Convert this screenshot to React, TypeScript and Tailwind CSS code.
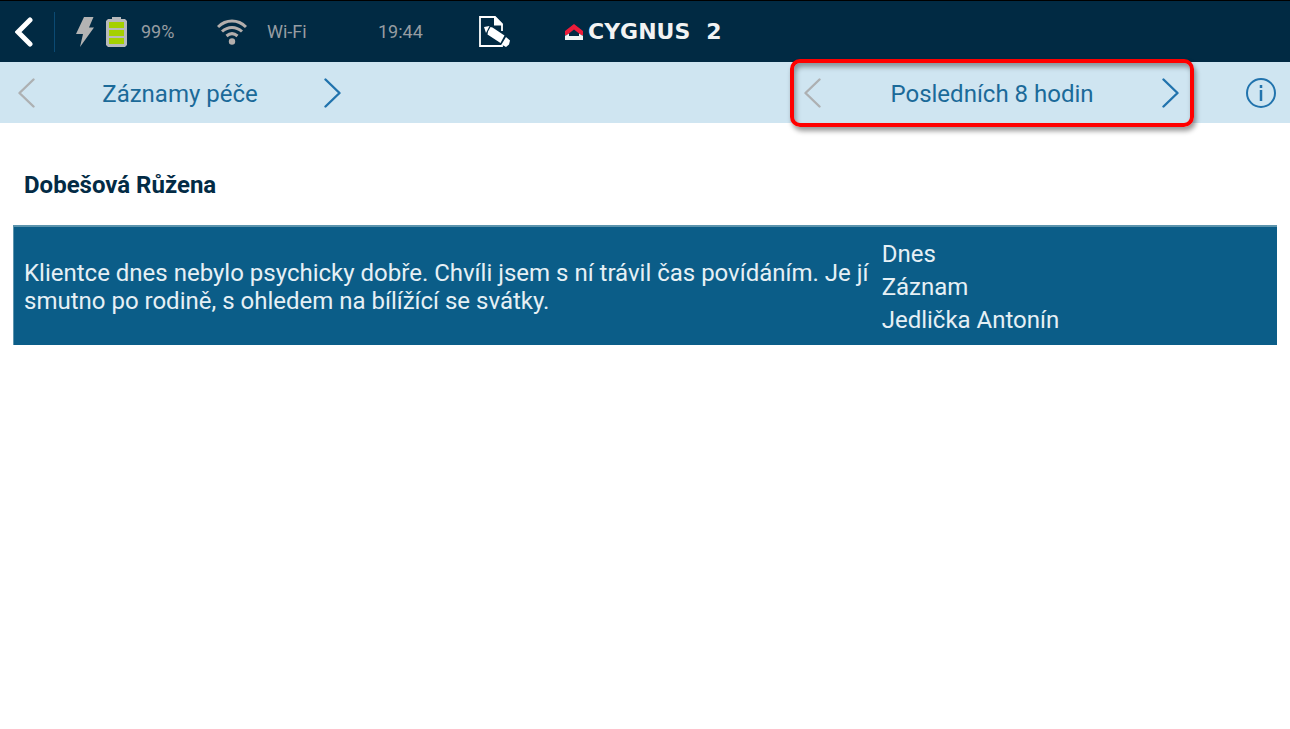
type SwitcherProps = {
  label: string;
  highlighted?: boolean;
};

const Chevron = ({ direction }: { direction: "left" | "right" }) => (
  <svg viewBox="0 0 18 32" className="h-8 w-[18px]" fill="none" stroke="currentColor" strokeWidth="2.400" strokeLinecap="round" strokeLinejoin="round">
    <path d={direction === "left" ? "M15.500 2.500 1.500 16 15.500 29.500" : "M1.500 2.500 15.500 16 1.500 29.500"} />
  </svg>
);

const Switcher = ({ label, highlighted }: SwitcherProps) => (
  <div className={`relative flex h-full items-center justify-between ${highlighted ? "w-[404px] px-[14px]" : "w-[360px] px-[18px]"}`}>
    <button type="button" aria-label="Předchozí" className="text-[#adb0b2]" disabled>
      <Chevron direction="left" />
    </button>
    <span className="pt-0.5 text-2xl">{label}</span>
    <button type="button" aria-label="Další" className="text-[#2173ad]">
      <Chevron direction="right" />
    </button>
    {highlighted && (
      <div className="pointer-events-none absolute inset-x-0 -top-[3px] -bottom-1 rounded-[10px] border-4 border-[#ff0000] shadow-[2px_4px_5px_rgba(0,0,0,0.4),inset_2px_4px_5px_rgba(0,0,0,0.35)]" />
    )}
  </div>
);

const BoltIcon = () => (
  <svg viewBox="0 0 18 31" className="ml-[21px] h-[31px] w-[18px]" fill="#b3b3b3">
    <path d="M8 1h9.500l-4.500 10.500h5L4 31l3-13H0z" />
  </svg>
);

const BatteryIcon = () => (
  <svg viewBox="0 0 21 30" className="ml-3 h-[30px] w-[21px]">
    <path d="M6 0h9v2h4l2 2v24l-2 2H2l-2-2V4l2-2h4z" fill="#b8b9bb" />
    <path d="M3 5h15v6H3zM3 13h15v6H3zM3 21h15v6H3z" fill="#a5d000" />
  </svg>
);

const WifiIcon = () => (
  <svg viewBox="0 0 30 26" className="h-[26px] w-[30px]" fill="none" stroke="#b3aeac" strokeWidth="3">
    <path d="M1 8C9 0 21 0 29 8M5 12.500C11 7 19 7 25 12.500M9.500 17C13 14 17 14 20.500 17" />
    <circle cx="15" cy="22.500" r="3.200" fill="#b3aeac" stroke="none" />
  </svg>
);

const NoteIcon = () => (
  <svg viewBox="0 0 32 32" className="h-8 w-8" fill="#fff">
    <path d="M23 15V8L16 1H1v29h22v-1.500" fill="none" stroke="#fff" strokeWidth="1.800" />
    <path d="M15 1h1.500L23.500 8v1.500H15z" />
    <path d="M5 11l5.500-1-3.500 7zM11.500 11 13.500 11.500 25.500 19.500 21.500 27 8.500 18.500 9 15.500zM27 21l4 3.500-1 4-3 2.500-4.500-2.500z" />
  </svg>
);

const Logo = () => (
  <div className="flex items-center font-['DejaVu_Sans',sans-serif] text-[22px] leading-6 font-bold text-[#f2f3f3]">
    <svg viewBox="0 0 18 16" className="mr-[5px] h-4 w-[18px]">
      <path d="M0 7 9 0l9 7v4h-2L9 5.500 2 11H0z" fill="#ed1c3a" />
      <path d="M0 11.500h1l3-2V12h10V9.500l3 2h1V16H0z" fill="#f2f3f3" />
    </svg>
    <span className="flex gap-4">
      <span>CYGNUS</span>
      <span>2</span>
    </span>
  </div>
);

const StatusBar = () => (
  <header className="flex h-[62px] items-center border-t border-black bg-[#012a43] text-lg text-[#969da2]">
    <button type="button" aria-label="Zpět" className="ml-[15px] text-white">
      <svg viewBox="0 0 18 30" className="h-[30px] w-[18px]" fill="none" stroke="currentColor" strokeWidth="5" strokeLinecap="round">
        <path d="M15 3 3 15 15 27" />
      </svg>
    </button>
    <div className="ml-[21px] h-10 w-px bg-[#0b4a73]" />
    <BoltIcon />
    <BatteryIcon />
    <span className="ml-[14px] w-[76px]">99%</span>
    <WifiIcon />
    <span className="ml-5 w-[111px]">Wi-Fi</span>
    <span className="w-[101px]">19:44</span>
    <button type="button" aria-label="Nový záznam">
      <NoteIcon />
    </button>
    <div className="ml-[54px]">
      <Logo />
    </div>
  </header>
);

export default function App() {
  return (
    <div className="min-h-screen bg-white font-['Roboto',sans-serif] text-[#1b6a99]">
      <StatusBar />
      <nav className="flex h-[61px] items-center bg-[#cfe5f1]">
        <Switcher label="Záznamy péče" />
        <div className="ml-auto h-full">
          <Switcher label="Posledních 8 hodin" highlighted />
        </div>
        <button type="button" aria-label="Informace" className="mr-[14px] ml-[52px] text-[#2173ad]">
          <svg viewBox="0 0 30 30" className="size-[30px]" fill="none" stroke="currentColor" strokeWidth="2">
            <circle cx="15" cy="15" r="14" />
            <path d="M15 12v11M15 7v3" strokeWidth="2.500" />
          </svg>
        </button>
      </nav>
      <main className="px-[13px] pt-[46px]">
        <h1 className="px-[11px] text-2xl font-bold text-[#032b45]">Dobešová Růžena</h1>
        <table className="mt-6 w-full table-fixed bg-[#0b5d88] text-left text-2xl text-[#e6f0f5]">
          <tbody>
            <tr className="h-[119px] border-t-2 border-l border-[#5c94ad]">
              <td className="w-[68%] pt-0.5 pl-[10px] leading-7">
                Klientce dnes nebylo psychicky dobře. Chvíli jsem s ní trávil čas povídáním. Je jí smutno po rodině, s ohledem na bílížící se svátky.
              </td>
              <td className="pt-0.5 pl-[9px] leading-[33px]">
                <div>Dnes</div>
                <div>Záznam</div>
                <div>Jedlička Antonín</div>
              </td>
            </tr>
          </tbody>
        </table>
      </main>
    </div>
  );
}
